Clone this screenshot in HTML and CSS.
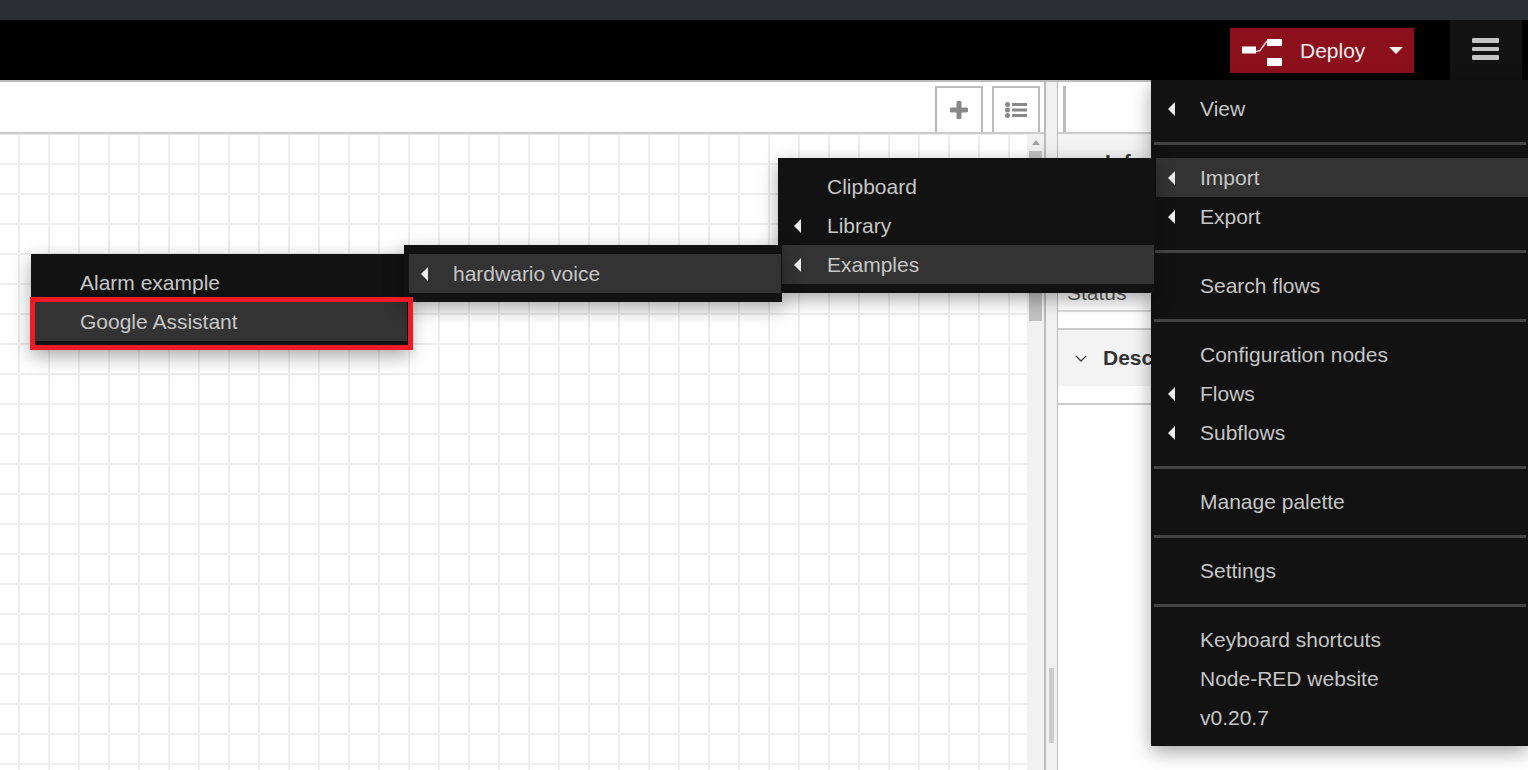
FILE: index.html
```html
<!DOCTYPE html>
<html lang="en">
<head>
  <meta charset="UTF-8">
  <meta name="viewport" content="width=device-width, initial-scale=1.0">
  <title>Node-RED</title>
  <link rel="stylesheet" href="styles.css">
</head>
<body>
  <div class="browser-bar"></div>

  <header class="header">
    <button class="deploy" type="button">
      <svg class="deploy-icon" width="40" height="27" viewBox="0 0 40 27">
        <rect x="0" y="7.5" width="14" height="7" fill="#fff"/>
        <rect x="25" y="0" width="15" height="7" fill="#fff"/>
        <rect x="25" y="19" width="15" height="8" fill="#fff"/>
        <path d="M14 12.5 L18 11.5 L25 2" fill="none" stroke="#e8c8cb" stroke-width="1.5"/>
      </svg>
      <span class="deploy-label">Deploy</span>
      <span class="deploy-caret"></span>
    </button>
    <button class="menu-btn" type="button">
      <span></span><span></span><span></span>
    </button>
  </header>

  <main class="main">
    <section class="workspace">
      <div class="tabs">
        <button class="tab-btn" type="button">
          <svg width="18" height="18" viewBox="0 0 18 18"><path d="M9 2v14M2 9h14" stroke="#888" stroke-width="5" stroke-linecap="round"/></svg>
        </button>
        <button class="tab-btn" type="button">
          <svg width="22" height="16" viewBox="0 0 22 16">
            <circle cx="2.5" cy="2.5" r="2.5" fill="#888"/>
            <circle cx="2.5" cy="8" r="2.5" fill="#888"/>
            <circle cx="2.5" cy="13.5" r="2.5" fill="#888"/>
            <rect x="7" y="1" width="15" height="3" fill="#888"/>
            <rect x="7" y="6.5" width="15" height="3" fill="#888"/>
            <rect x="7" y="12" width="15" height="3" fill="#888"/>
          </svg>
        </button>
      </div>
      <div class="chart-wrap">
        <div class="chart"></div>
        <div class="scrollbar">
          <span class="scroll-up"></span>
          <span class="scroll-thumb"></span>
        </div>
      </div>
    </section>

    <div class="separator"><span class="separator-handle"></span></div>

    <aside class="sidebar">
      <div class="sidebar-tabs"><span class="sidebar-tab"></span></div>
      <div class="section-head section-info">
        <span>Inf</span>
      </div>
      <div class="status-row">Status</div>
      <div class="section-head section-desc">
        <svg class="chevron" width="12" height="7" viewBox="0 0 12 7"><path d="M1 1l5 5 5-5" fill="none" stroke="#444" stroke-width="1.3"/></svg>
        <span>Desc</span>
      </div>
      <div class="section-gap"></div>
    </aside>
  </main>

  <ul class="menu menu-main">
    <li class="has-sub">View</li>
    <li class="divider"></li>
    <li class="has-sub active">Import</li>
    <li class="has-sub">Export</li>
    <li class="divider"></li>
    <li>Search flows</li>
    <li class="divider"></li>
    <li>Configuration nodes</li>
    <li class="has-sub">Flows</li>
    <li class="has-sub">Subflows</li>
    <li class="divider"></li>
    <li>Manage palette</li>
    <li class="divider"></li>
    <li>Settings</li>
    <li class="divider"></li>
    <li>Keyboard shortcuts</li>
    <li>Node-RED website</li>
    <li>v0.20.7</li>
  </ul>

  <ul class="menu menu-import">
    <li>Clipboard</li>
    <li class="has-sub">Library</li>
    <li class="has-sub active">Examples</li>
  </ul>

  <ul class="menu menu-examples">
    <li class="has-sub active">hardwario voice</li>
  </ul>

  <ul class="menu menu-flows">
    <li>Alarm example</li>
    <li class="active">Google Assistant</li>
  </ul>

  <div class="highlight"></div>
</body>
</html>
```

FILE: styles.css
```css
* {
  box-sizing: border-box;
}

html, body {
  height: 100%;
}

body {
  margin: 0;
  display: flex;
  flex-direction: column;
  overflow: hidden;
  font-family: "Liberation Sans", Arial, sans-serif;
  font-size: 21px;
  background: #fff;
}

button {
  font-family: inherit;
  border: none;
  padding: 0;
}

.browser-bar {
  height: 20px;
  background: #2c2e33;
}

.header {
  height: 60px;
  background: #000;
  display: flex;
  justify-content: flex-end;
  padding-right: 6px;
}

.deploy {
  width: 184px;
  height: 45px;
  margin-top: 8px;
  margin-right: 36px;
  background: #8c101c;
  color: #eee;
  font-size: 21px;
  display: flex;
  align-items: center;
  padding-left: 12px;
}

.deploy-icon {
  margin-top: 4px;
}

.deploy-label {
  margin-left: 18px;
  line-height: 25px;
}

.deploy-caret {
  margin-left: 24px;
  border-left: 7px solid transparent;
  border-right: 7px solid transparent;
  border-top: 7px solid #eee;
}

.menu-btn {
  width: 72px;
  background: #121212;
  display: flex;
  flex-direction: column;
  align-items: center;
  padding-top: 18px;
  padding-right: 1px;
  gap: 4px;
}

.menu-btn span {
  width: 27px;
  height: 4.5px;
  background: #c4c4c4;
  border-radius: 1px;
}

.main {
  flex: 1;
  display: flex;
  min-height: 0;
  border-top: 2px solid #bbb;
}

.workspace {
  width: 1044px;
  display: flex;
  flex-direction: column;
}

.tabs {
  height: 52px;
  display: flex;
  justify-content: flex-end;
  align-items: flex-end;
  gap: 9px;
  padding-right: 4px;
  border-bottom: 2px solid #ccc;
}

.tab-btn {
  width: 48px;
  height: 46px;
  background: #fff;
  border: 2px solid #bbb;
  border-bottom: none;
  display: flex;
  align-items: center;
  justify-content: center;
}

.chart-wrap {
  flex: 1;
  display: flex;
  min-height: 0;
}

.chart {
  flex: 1;
  background-color: #fff;
  background-image:
    linear-gradient(to right, #eee 2px, transparent 2px),
    linear-gradient(to bottom, #eee 2px, transparent 2px);
  background-size: 30px 30px;
  background-position: 18px 29px;
}

.scrollbar {
  width: 17px;
  background: #f1f1f1;
  display: flex;
  flex-direction: column;
  align-items: center;
  padding-top: 6px;
}

.scroll-up {
  border-left: 4px solid transparent;
  border-right: 4px solid transparent;
  border-bottom: 5px solid #a3a3a3;
}

.scroll-thumb {
  width: 13px;
  height: 170px;
  margin-top: 6px;
  background: #c1c1c1;
}

.separator {
  width: 14px;
  background: #f0f0f0;
  border-left: 2px solid #bbb;
  border-right: 1px solid #bbb;
  padding-top: 586px;
  padding-left: 3px;
}

.separator-handle {
  display: block;
  width: 5px;
  height: 75px;
  background: #ccc;
}

.sidebar {
  flex: 1;
  min-width: 0;
  background: #fff;
}

.sidebar-tabs {
  height: 52px;
  padding: 4px 0 0 5px;
  border-bottom: 2px solid #ccc;
}

.sidebar-tab {
  display: block;
  width: 3px;
  height: 46px;
  background: #bbb;
}

.section-head {
  display: flex;
  align-items: center;
  background: #f3f3f3;
  font-weight: bold;
  color: #333;
}

.section-info {
  height: 56px;
  padding-left: 47px;
}

.section-desc {
  height: 58px;
  padding-left: 17px;
  border-top: 2px solid #ccc;
  margin-top: 16px;
}

.chevron {
  margin-right: 16px;
}

.status-row {
  height: 122px;
  padding: 91px 0 0 9px;
  color: #555;
  line-height: 24px;
  border-bottom: 2px solid #ddd;
}

.section-gap {
  height: 19px;
  border-bottom: 2px solid #ccc;
}

/* dropdown menus sit over the editor */
.menu {
  position: absolute;
  margin: 0;
  list-style: none;
  padding: 9px 0;
  background: #121212;
  color: #c6c6c6;
  box-shadow: 0 6px 18px rgba(0, 0, 0, 0.35);
}

.menu li {
  position: relative;
  height: 39px;
  line-height: 40px;
  padding-left: 44px;
  margin-left: 5px;
}

.menu li.active {
  background: #333;
}

.menu li.has-sub::before {
  content: "";
  position: absolute;
  left: 12px;
  top: 13px;
  border-top: 7px solid transparent;
  border-bottom: 7px solid transparent;
  border-right: 7px solid #eee;
}

.menu li.divider {
  height: 3px;
  margin: 13.5px 2px 13.5px 3px;
  padding: 0;
  background: #444;
}

.menu-main {
  top: 80px;
  left: 1151px;
  width: 377px;
  z-index: 1;
}

.menu-import {
  top: 158px;
  left: 778px;
  width: 377px;
  z-index: 2;
}

.menu-import li {
  margin-left: 4px;
  margin-right: 1px;
  padding-left: 45px;
}

.menu-examples {
  top: 245px;
  left: 404px;
  width: 378px;
  z-index: 3;
}

.menu-examples li {
  margin-right: 1px;
}

.menu-flows {
  top: 254px;
  left: 31px;
  width: 379px;
  z-index: 2;
}

.menu-flows li {
  margin-left: 4px;
  margin-right: 3px;
  padding-left: 45px;
}

.highlight {
  position: absolute;
  top: 297px;
  left: 30px;
  width: 383px;
  height: 53px;
  border: 5px solid #ed1c24;
  z-index: 4;
}
```
